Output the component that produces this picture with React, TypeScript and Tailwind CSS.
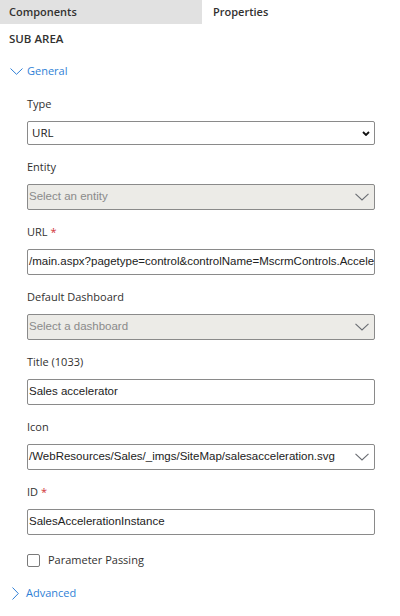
// Sitemap designer - Properties pane for a sub area

const labelFont = { fontFamily: '"Open Sans", "Noto Sans", sans-serif' };

function Chevron({ className }: { className?: string }) {
    return (
        <svg width="14" height="8" viewBox="0 0 14 8" className={className} fill="none">
            <path d="M0.5 0.8 L7 7 L13.5 0.8" stroke="currentColor" strokeWidth="1.1" />
        </svg>
    );
}

function Label({ text, required }: { text: string; required?: boolean }) {
    return (
        <div className="h-[20px] leading-[20px] mb-[7px] text-[11px] text-[#323130] font-['Open_Sans',sans-serif]">
            {text}
            {required && <span className="text-[#d13438] ml-[3px]">*</span>}
        </div>
    );
}

function TextBox({ value }: { value: string }) {
    return (
        <div className="h-[26px] border border-[#8a8a8a] rounded-[2px] bg-white flex items-center overflow-hidden whitespace-nowrap pl-[1px] text-[11.5px] text-[#222] font-['Liberation_Sans',Arial,sans-serif]">
            {value}
        </div>
    );
}

function DropBox({ value, disabled }: { value: string; disabled?: boolean }) {
    return (
        <div
            className={`h-[26px] border border-[#8a8a8a] rounded-[2px] flex items-center justify-between overflow-hidden whitespace-nowrap pl-[1px] pr-[5px] text-[11.5px] font-['Liberation_Sans',Arial,sans-serif] ${
                disabled ? 'bg-[#ecebe7] text-[#8a8a8a]' : 'bg-white text-[#222]'
            }`}
        >
            <span>{value}</span>
            <Chevron className="text-[#6a6d73] shrink-0" />
        </div>
    );
}

export default function App() {
    return (
        <div className="w-[400px] h-[616px] bg-white overflow-hidden" style={labelFont}>
            {/* Tabs */}
            <div className="flex h-[24px] text-[11px] font-semibold text-[#323130]">
                <div className="w-[202px] bg-[#e1e1e1] pl-[9px] flex items-center">Components</div>
                <div className="pl-[11px] flex items-center">Properties</div>
            </div>

            <div className="mt-[5px] pl-[9px] h-[20px] leading-[20px] text-[11.5px] font-semibold text-[#323130]">
                SUB AREA
            </div>

            {/* General section */}
            <div className="mt-[12px] h-[20px] flex items-center text-[11px] text-[#2f7fd6]">
                <svg width="13" height="7" viewBox="0 0 13 7" className="ml-[10px] mr-[4px]" fill="none">
                    <path d="M0.5 0.5 L6.5 6.3 L12.5 0.5" stroke="currentColor" strokeWidth="1" />
                </svg>
                General
            </div>

            <div className="pl-[27px] pr-[25px] mt-[13px]">
                <Label text="Type" />
                <div className="h-[24px] border border-[#8a8a8a] rounded-[2px] bg-white flex items-center justify-between pl-[4px] pr-[4px] text-[11.5px] text-[#222]">
                    <span>URL</span>
                    <svg width="8" height="5" viewBox="0 0 8 5" fill="none">
                        <path d="M1 1 L4 4 L7 1" stroke="#111" strokeWidth="1.8" />
                    </svg>
                </div>

                <div className="mt-[12px]">
                    <Label text="Entity" />
                    <DropBox value="Select an entity" disabled />
                </div>

                <div className="mt-[12px]">
                    <Label text="URL" required />
                    <TextBox value="/main.aspx?pagetype=control&controlName=MscrmControls.Accele" />
                </div>

                <div className="mt-[12px]">
                    <Label text="Default Dashboard" />
                    <DropBox value="Select a dashboard" disabled />
                </div>

                <div className="mt-[12px]">
                    <Label text="Title (1033)" />
                    <TextBox value="Sales accelerator" />
                </div>

                <div className="mt-[12px]">
                    <Label text="Icon" />
                    <DropBox value="/WebResources/Sales/_imgs/SiteMap/salesacceleration.svg" />
                </div>

                <div className="mt-[12px]">
                    <Label text="ID" required />
                    <TextBox value="SalesAccelerationInstance" />
                </div>

                <div className="mt-[15px] h-[20px] flex items-center text-[11px] text-[#323130]">
                    <span className="w-[13px] h-[13px] border border-[#7a7a7a] rounded-[2px] bg-white mr-[8px]" />
                    Parameter Passing
                </div>
            </div>

            {/* Advanced section */}
            <div className="mt-[13px] h-[20px] flex items-center text-[11px] text-[#2f7fd6]">
                <svg width="7" height="13" viewBox="0 0 7 13" className="ml-[12px] mr-[7px]" fill="none">
                    <path d="M0.5 0.5 L6.3 6.5 L0.5 12.5" stroke="currentColor" strokeWidth="1" />
                </svg>
                Advanced
            </div>
        </div>
    );
}
